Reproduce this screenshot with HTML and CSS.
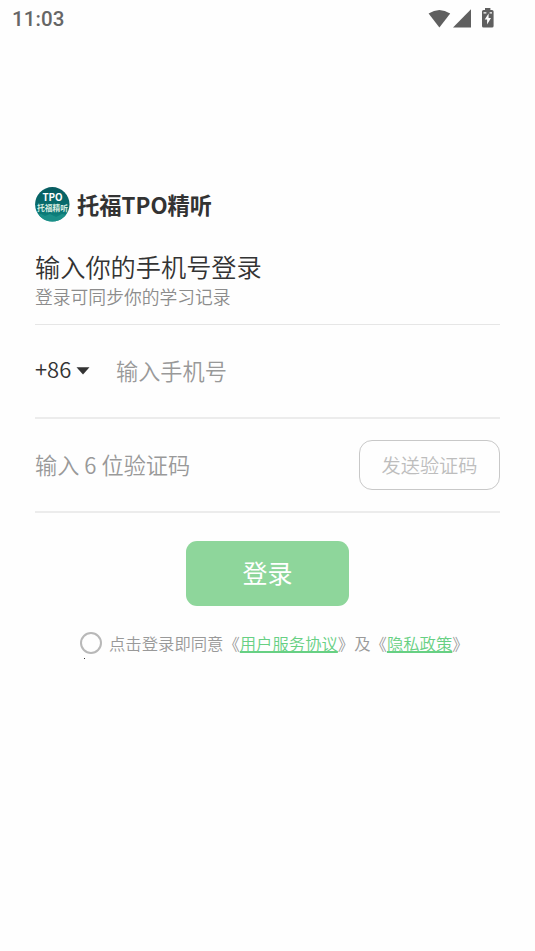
FILE: index.html
```html
<!DOCTYPE html>
<html lang="zh-CN">
<head>
<meta charset="utf-8">
<title>登录</title>
<link rel="stylesheet" href="styles.css">
</head>
<body>
<header class="status">
  <span class="clock">11:03</span>
  <svg class="status-icons" width="68" height="22" viewBox="0 0 68 22" fill="#5f5f5f">
    <path d="M.6 5.5Q11.4-1.7 22.2 5.5L11.4 19.5Z"/>
    <path d="M25 19.5H43V1.2Z"/>
    <path fill-rule="evenodd" d="M57 0H62.400V2H64Q65.600 2 65.600 3.500V18Q65.600 19.500 64 19.500H55.500Q54 19.500 54 18V3.500Q54 2 55.500 2H57ZM55.500 4.300V5.600H58.400V4.300ZM60.600 5.400L56.700 11.500H59.100V16.400L63 9.900H60.600ZM61.600 4.300V5.600H64V4.300Z"/>
  </svg>
</header>
<main class="login">
  <div class="brand">
    <svg class="logo" width="35" height="35" viewBox="0 0 35 35">
      <defs><linearGradient id="g" x1="0" y1="0" x2="0" y2="1"><stop offset="0" stop-color="#075b60"/><stop offset=".65" stop-color="#08716f"/><stop offset="1" stop-color="#15908a"/></linearGradient>
      <clipPath id="disc"><circle cx="17.300" cy="17.300" r="17.200"/></clipPath></defs>
      <g clip-path="url(#disc)">
        <rect width="35" height="35" fill="url(#g)"/>
        <path fill="#1b8f88" d="M0 29L6 27 10 29 15 27 21 30 27 27 35 29V35H0Z"/>
        <text class="logo-latin" x="17.500" y="13.800" text-anchor="middle">TPO</text>
        <text class="logo-han" x="17.500" y="23.800" text-anchor="middle">托福精听</text>
      </g>
    </svg>
    <span class="brand-name">托福TPO精听</span>
  </div>
  <h1 class="heading">输入你的手机号登录</h1>
  <p class="subheading">登录可同步你的学习记录</p>
  <div class="row phone">
    <span class="code">+86</span>
    <svg class="caret" width="14" height="8" viewBox="0 0 14 8"><path fill="#333" d="M.5.3H13.500L7 7.500Z"/></svg>
    <span class="hint">输入手机号</span>
  </div>
  <div class="row verify">
    <span class="hint">输入 6 位验证码</span>
    <button class="send">发送验证码</button>
  </div>
  <button class="submit">登录</button>
  <div class="terms">
    <span class="radio"></span>
    <span class="terms-text">点击登录即同意《<a class="link">用户服务协议</a>》及《<a class="link">隐私政策</a>》</span>
    <i class="dot"></i>
  </div>
</main>
</body>
</html>
```
FILE: styles.css
```css
* { box-sizing: border-box; }
body {
  margin: 0;
  height: 951px;
  overflow: hidden;
  background: #fefefe;
  color: #333;
  font-family: "Noto Sans CJK SC", sans-serif;
  font-weight: 350;
}
.status {
  display: flex;
  justify-content: space-between;
  height: 38px;
  padding: 7px 39px 0 12px;
}
.status-icons { margin-top: 1px; }
.clock {
  font: 500 20.500px/25px Roboto, sans-serif;
  letter-spacing: .1px;
  color: #666;
}
.login {
  display: flex;
  flex-direction: column;
  padding: 147px 35px 0;
}
.brand { display: flex; align-items: center; gap: 7px; height: 38px; }
.logo { flex: none; }
.logo-latin { font: 700 9.800px "Noto Sans CJK SC", sans-serif; fill: #fff; }
.logo-han { font: 700 7.800px "Noto Sans CJK SC", sans-serif; fill: #d8ece0; }
.brand-name { font-size: 22.300px; font-weight: 700; line-height: 38px; white-space: nowrap; }
.heading { margin: 25px 0 0; font-size: 25.200px; font-weight: 350; line-height: 36px; }
.subheading {
  margin: 0;
  height: 41px;
  border-bottom: 1px solid #e6e6e6;
  font-size: 17.800px;
  line-height: 24px;
  color: #8c8c8c;
}
.row { display: flex; align-items: center; height: 94px; border-bottom: 2px solid #ececec; }
.code { width: 37px; margin-top: -6px; font-size: 22px; line-height: 32px; }
.caret { margin: 0 26px 0 4px; }
.hint { margin-top: -2px; font-size: 22.200px; line-height: 32px; color: #999; white-space: nowrap; }
.send {
  width: 141px;
  height: 50px;
  margin-left: auto;
  padding: 0;
  border: 1.500px solid #c8c8c8;
  border-radius: 13px;
  background: none;
  color: #bdbdbd;
  font: 350 19.200px/28px "Noto Sans CJK SC", sans-serif;
}
.submit {
  align-self: center;
  width: 163px;
  height: 65px;
  margin-top: 28px;
  padding: 0 0 4px;
  border: 0;
  border-radius: 11px;
  background: #8ed69b;
  color: #fff;
  font: 400 25px/36px "Noto Sans CJK SC", sans-serif;
}
.terms { position: relative; display: flex; align-items: center; height: 24px; margin: 25px 0 0 45px; }
.radio { width: 22px; height: 22px; margin-right: 7px; border: 2px solid #b8b8b8; border-radius: 50%; }
.terms-text {
  font: 350 16.350px/24px "Noto Sans CJK SC", sans-serif;
  color: #999;
  white-space: nowrap;
}
.link { color: #67d083; text-decoration: underline; text-decoration-thickness: 1.500px; }
.dot { position: absolute; left: 4px; top: 27px; width: 1px; height: 1px; background: #333; }
```
